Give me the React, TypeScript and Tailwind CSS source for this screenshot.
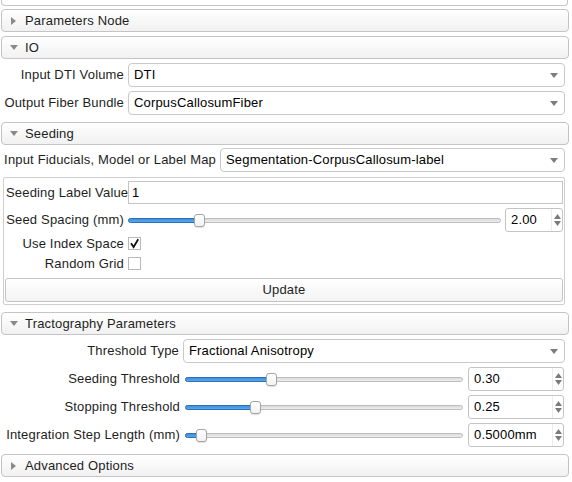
import React from 'react';

const font = { fontFamily: '"Liberation Sans", Arial, sans-serif', letterSpacing: '0.17px' };

const Arrow: React.FC<{ open: boolean }> = ({ open }) =>
  open ? (
    <svg width="8" height="5" viewBox="0 0 8 5">
      <path d="M0 0H8L4 5Z" fill="#8a8a8a" />
    </svg>
  ) : (
    <svg width="5" height="8" viewBox="0 0 5 8">
      <path d="M0 0V8L5 4Z" fill="#8a8a8a" />
    </svg>
  );

const Section: React.FC<{ title: string; open?: boolean; className?: string }> = ({ title, open = false, className = '' }) => (
  <div
    className={`ml-[1px] w-[568px] h-[23px] flex items-center border border-[#c4c4c4] rounded-[4px] bg-gradient-to-b from-white to-[#f1f1f1] text-[13px] text-[#1e1e1e] ${className}`}
  >
    <span className="w-[23px] flex justify-center">
      <Arrow open={open} />
    </span>
    <span>{title}</span>
  </div>
);

const Combo: React.FC<{ value: string }> = ({ value }) => (
  <div className="h-[24px] flex items-center justify-between border border-[#c9c9c9] rounded-[4px] bg-white pl-[5px] pr-[6px] text-[13px] text-black">
    <span>{value}</span>
    <svg width="8" height="5" viewBox="0 0 8 5">
      <path d="M0 0H8L4 5Z" fill="#7d7d7d" />
    </svg>
  </div>
);

const SpinBox: React.FC<{ value: string; width: string }> = ({ value, width }) => (
  <div className={`${width} h-[24px] flex items-center border border-[#c4c4c4] rounded-[3px] bg-white text-[13px] text-black`}>
    <span className="flex-1 pl-[5px]">{value}</span>
    <span className="h-full w-[11px] flex flex-col items-center justify-center gap-[2px] border-l border-[#ececec]">
      <svg width="7" height="5" viewBox="0 0 7 5">
        <path d="M0 5H7L3.5 0Z" fill="#7a7a7a" />
      </svg>
      <svg width="7" height="5" viewBox="0 0 7 5">
        <path d="M0 0H7L3.5 5Z" fill="#7a7a7a" />
      </svg>
    </span>
  </div>
);

const Slider: React.FC<{ pos: number }> = ({ pos }) => (
  <div className="relative flex-1 h-[14px] flex items-center">
    <div className="w-full h-[5px] rounded-[3px] border border-[#bdbdbd] bg-gradient-to-b from-[#dcdcdc] to-[#ececec]" />
    <div
      className="absolute left-0 h-[5px] rounded-l-[3px] border border-[#2a70b8] bg-gradient-to-b from-[#3f8fdc] to-[#5aa7ec]"
      style={{ width: pos + 2 }}
    />
    <div
      className="absolute top-[1px] w-[11px] h-[13px] rounded-[3px] border border-[#a4a4a4] bg-gradient-to-b from-white to-[#f2f2f2] shadow-[0_1px_1px_rgba(0,0,0,0.12)]"
      style={{ left: pos }}
    />
  </div>
);

const Check: React.FC<{ checked: boolean }> = ({ checked }) => (
  <span className="w-[13px] h-[13px] border border-[#b9b9b9] bg-white flex items-center justify-center">
    {checked && (
      <svg width="11" height="11" viewBox="0 0 11 11">
        <path d="M2 5.2L4.6 9L9.2 1.2" fill="none" stroke="#111" strokeWidth="1.8" />
      </svg>
    )}
  </span>
);

const Label: React.FC<{ children: React.ReactNode; w: string }> = ({ children, w }) => (
  <span className={`${w} shrink-0 text-right text-[13px] text-[#1e1e1e] whitespace-nowrap`}>{children}</span>
);

export default function App() {
  return (
    <div className="w-[572px] h-[482px] bg-white overflow-hidden relative" style={font}>
      {/* tail of the panel above */}
      <div className="ml-[1px] w-[567px] h-[6px] border border-t-0 border-[#c4c4c4] rounded-b-[4px]" />

      <Section title="Parameters Node" className="mt-[3px]" />
      <Section title="IO" open className="mt-[4px]" />

      <div className="mt-[4px] w-[565px] flex flex-col gap-[4px]">
        <div className="flex items-center gap-[4px]">
          <Label w="w-[124px]">Input DTI Volume</Label>
          <div className="flex-1">
            <Combo value="DTI" />
          </div>
        </div>
        <div className="flex items-center gap-[4px]">
          <Label w="w-[124px]">Output Fiber Bundle</Label>
          <div className="flex-1">
            <Combo value="CorpusCallosumFiber" />
          </div>
        </div>
      </div>

      <Section title="Seeding" open className="mt-[7px]" />

      <div className="mt-[3px] w-[565px] flex items-center gap-[4px]">
        <Label w="w-[216px]">Input Fiducials, Model or Label Map</Label>
        <div className="flex-1">
          <Combo value="Segmentation-CorpusCallosum-label" />
        </div>
      </div>

      <div className="mt-[5px] ml-[3px] w-[562px] h-[128px] border border-[#cfcfcf] rounded-[2px] pl-[2px] pr-[1px] pt-[3px]">
        <div className="flex items-center gap-[4px]">
          <Label w="w-[118px]">Seeding Label Value</Label>
          <div className="flex-1 h-[23px] flex items-center border border-[#c4c4c4] bg-white pl-[3px] text-[13px] text-black">1</div>
        </div>
        <div className="mt-[4px] flex items-center gap-[4px]">
          <Label w="w-[118px]">Seed Spacing (mm)</Label>
          <Slider pos={66} />
          <SpinBox value="2.00" width="w-[58px]" />
        </div>
        <div className="mt-[3px] flex items-center gap-[4px] h-[17px]">
          <Label w="w-[118px]">Use Index Space</Label>
          <Check checked />
        </div>
        <div className="mt-[3px] flex items-center gap-[4px] h-[17px]">
          <Label w="w-[118px]">Random Grid</Label>
          <Check checked={false} />
        </div>
        <div className="mt-[6px] ml-[-1px] h-[24px] flex items-center justify-center border border-[#c4c4c4] rounded-[3px] bg-gradient-to-b from-white to-[#f3f3f3] text-[13px] text-[#1e1e1e]">
          Update
        </div>
      </div>

      <Section title="Tractography Parameters" open className="mt-[7px]" />

      <div className="mt-[4px] w-[565px] flex flex-col">
        <div className="flex items-center gap-[4px]">
          <Label w="w-[179px]">Threshold Type</Label>
          <div className="flex-1">
            <Combo value="Fractional Anisotropy" />
          </div>
        </div>
        <div className="mt-[4px] flex items-center gap-[5px] pr-[1px]">
          <Label w="w-[180px]">Seeding Threshold</Label>
          <Slider pos={81} />
          <SpinBox value="0.30" width="w-[96px]" />
        </div>
        <div className="mt-[4px] flex items-center gap-[5px] pr-[1px]">
          <Label w="w-[180px]">Stopping Threshold</Label>
          <Slider pos={65} />
          <SpinBox value="0.25" width="w-[96px]" />
        </div>
        <div className="mt-[4px] flex items-center gap-[5px] pr-[1px]">
          <Label w="w-[180px]">Integration Step Length (mm)</Label>
          <Slider pos={11} />
          <SpinBox value="0.5000mm" width="w-[96px]" />
        </div>
      </div>

      <Section title="Advanced Options" className="mt-[7px]" />
    </div>
  );
}
